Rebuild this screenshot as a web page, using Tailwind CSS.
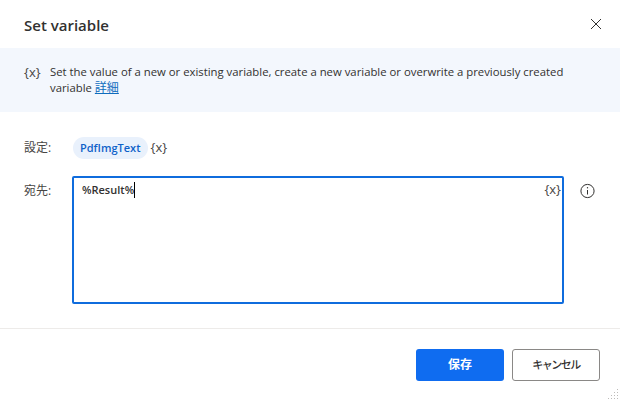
<!DOCTYPE html>
<html lang="ja">
<head>
  <meta charset="UTF-8" />
  <title>Set variable</title>
  <script src="https://cdn.jsdelivr.net/npm/@tailwindcss/browser@4"></script>
</head>
<body class="bg-white font-['Open_Sans','Noto_Sans_CJK_JP',sans-serif] text-[#323130] overflow-hidden">
  <div class="relative flex flex-col w-[620px] h-[401px]">
    <!-- header -->
    <div class="flex items-center justify-between h-12 pl-6 pr-[17px]">
      <h1 class="text-[15px] font-semibold leading-5 mt-[2px]">Set variable</h1>
      <svg class="w-3 h-3 mr-[1px]" viewBox="0 0 12 12" fill="none" stroke="#323130" stroke-width="1"><path d="M1 1l10 10M11 1L1 11"/></svg>
    </div>

    <!-- description -->
    <div class="flex h-16 bg-[#f3f7fd] pl-6 pt-[16px] text-xs leading-4">
      <span class="w-[26px] shrink-0 text-[13px] text-[#484644]">{x}</span>
      <p class="w-[530px] text-[11.33px] text-[#323130]">Set the value of a new or existing variable, create a new variable or overwrite a previously created variable <a class="text-[12px] text-[#0f6cbd] underline">詳細</a></p>
    </div>

    <!-- form -->
    <div class="flex flex-col flex-1 pl-6 pt-[25px] text-xs">
      <div class="flex items-center h-[22px]">
        <label class="w-[49px] text-[#484644]">設定:</label>
        <span class="flex items-center h-[22px] px-[7px] rounded-full bg-[#e9f1fc] text-[#0f62c9] text-[11px] font-semibold">PdfImgText</span>
        <span class="ml-[3px] text-[13px] text-[#484644]">{x}</span>
      </div>
      <div class="flex mt-[17px]">
        <label class="w-12 mt-[7px] text-[#484644]">宛先:</label>
        <div class="flex justify-between w-[492px] h-[128px] border-2 border-[#0f6cdd] rounded-[2px] pl-2 pr-[1px] pt-[3px]">
          <span class="flex items-center h-[18px] text-[11px] font-semibold text-[#323130]">%Result%<span class="w-px h-[16px] bg-black"></span></span>
          <span class="h-[18px] text-[13px] text-[#484644]">{x}</span>
        </div>
        <svg class="w-4 h-4 ml-4 mt-[7px]" viewBox="0 0 16 16" fill="none" stroke="#323130"><circle cx="7.5" cy="8" r="6.6"/><path d="M7.5 7v4.5"/><circle cx="7.5" cy="4.8" r=".7" fill="#323130" stroke="none"/></svg>
      </div>
    </div>

    <!-- footer -->
    <div class="flex justify-end gap-2 h-[73px] border-t border-[#edebe9] pt-[20px] pr-5 text-xs">
      <button class="w-[88px] h-8 rounded-[3px] bg-[#0f6cf0] text-white font-semibold">保存</button>
      <button class="w-[88px] h-8 rounded-[3px] border border-[#8a8886] bg-white text-[11px] tracking-[-1.5px] font-medium text-[#323130]">キャンセル</button>
    </div>

    <!-- resize grip -->
    <svg class="absolute right-0 bottom-0 w-3 h-3" viewBox="0 0 12 12" fill="#bdbbb9"><rect x="9" y="0" width="1" height="1"/><rect x="6" y="3" width="1" height="1"/><rect x="9" y="3" width="1" height="1"/><rect x="3" y="6" width="1" height="1"/><rect x="6" y="6" width="1" height="1"/><rect x="9" y="6" width="1" height="1"/><rect x="0" y="9" width="1" height="1"/><rect x="3" y="9" width="1" height="1"/><rect x="6" y="9" width="1" height="1"/><rect x="9" y="9" width="1" height="1"/></svg>
  </div>
</body>
</html>
